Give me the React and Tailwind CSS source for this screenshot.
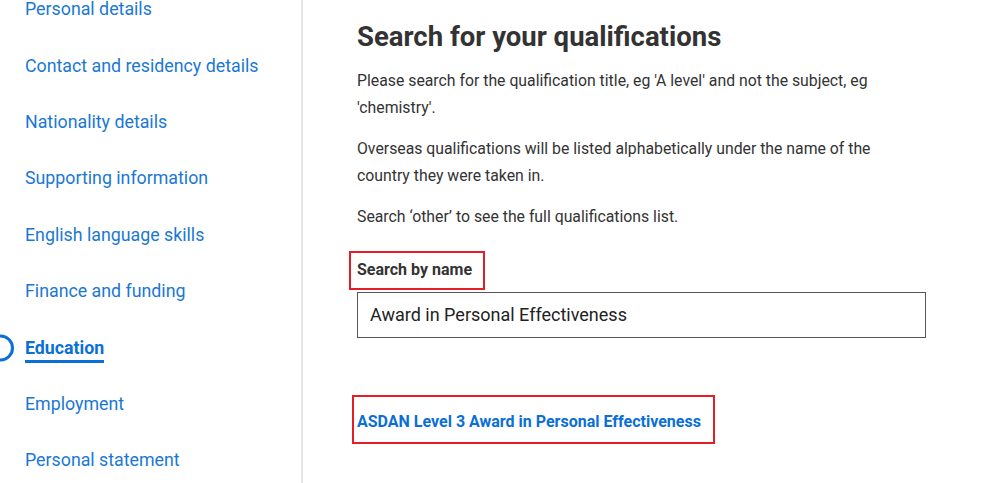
import React, { useState } from 'react';

const navItems = [
    'Personal details',
    'Contact and residency details',
    'Nationality details',
    'Supporting information',
    'English language skills',
    'Finance and funding',
    'Education',
    'Employment',
    'Personal statement',
];

export default function App() {
    const [query, setQuery] = useState('Award in Personal Effectiveness');
    const active = 'Education';

    return (
        <div className="flex h-[483px] overflow-hidden bg-white font-['Roboto','Liberation_Sans',sans-serif]">
            {/* Side navigation */}
            <aside className="w-[303px] shrink-0 border-r-2 border-[#e6e6e6]">
                <ul className="-mt-[19px]">
                    {navItems.map((item) => (
                        <li key={item} className="relative flex h-[56.4px] items-center pl-[25px]">
                            {item === active ? (
                                <>
                                    <span className="absolute left-[-13px] top-1/2 h-[27px] w-[27px] -translate-y-1/2 rounded-full border-[3px] border-[#0a6fd6]" />
                                    <a href="#" className="mt-[3px] border-b-[3px] border-[#0a6fd6] text-[17.8px] font-bold leading-[24px] text-[#0a6fd6]">
                                        {item}
                                    </a>
                                </>
                            ) : (
                                <a href="#" className="text-[17.8px] leading-[24px] text-[#1a78d4]">
                                    {item}
                                </a>
                            )}
                        </li>
                    ))}
                </ul>
            </aside>

            {/* Main content */}
            <main className="flex-1 pl-[54px] pt-[19px]">
                <div className="w-[569px] text-[#333]">
                    <h1 className="text-[27.5px] font-bold leading-[36px] text-[#333]">Search for your qualifications</h1>
                    <p className="mt-[11.5px] text-[15.8px] leading-[27px]">
                        Please search for the qualification title, eg 'A level' and not the subject, eg 'chemistry'.
                    </p>
                    <p className="mt-[14px] text-[15.8px] leading-[27px]">
                        Overseas qualifications will be listed alphabetically under the name of the country they were taken in.
                    </p>
                    <p className="mt-[14px] text-[15.8px] leading-[27px]">Search ‘other’ to see the full qualifications list.</p>

                    <label htmlFor="qual-search" className="relative mt-[30px] block w-fit text-[16px] font-bold leading-[20px] text-[#333]">
                        Search by name
                        <span className="pointer-events-none absolute -left-[8px] -right-[13px] -top-[9px] -bottom-[10px] border-2 border-[#e41e26]" />
                    </label>
                    <input
                        id="qual-search"
                        type="text"
                        value={query}
                        onChange={(e) => setQuery(e.target.value)}
                        className="mt-[12px] h-[46px] w-full border border-[#555] px-[12px] text-[18px] text-[#222] outline-none"
                    />

                    <div className="mt-[72px]">
                        <a href="#" className="relative inline-block text-[16px] font-bold leading-[20px] text-[#0a6fd6]">
                            ASDAN Level 3 Award in Personal Effectiveness
                            <span className="pointer-events-none absolute -left-[5px] -right-[14px] -top-[17px] -bottom-[12px] border-2 border-[#e41e26]" />
                        </a>
                    </div>
                </div>
            </main>
        </div>
    );
}
